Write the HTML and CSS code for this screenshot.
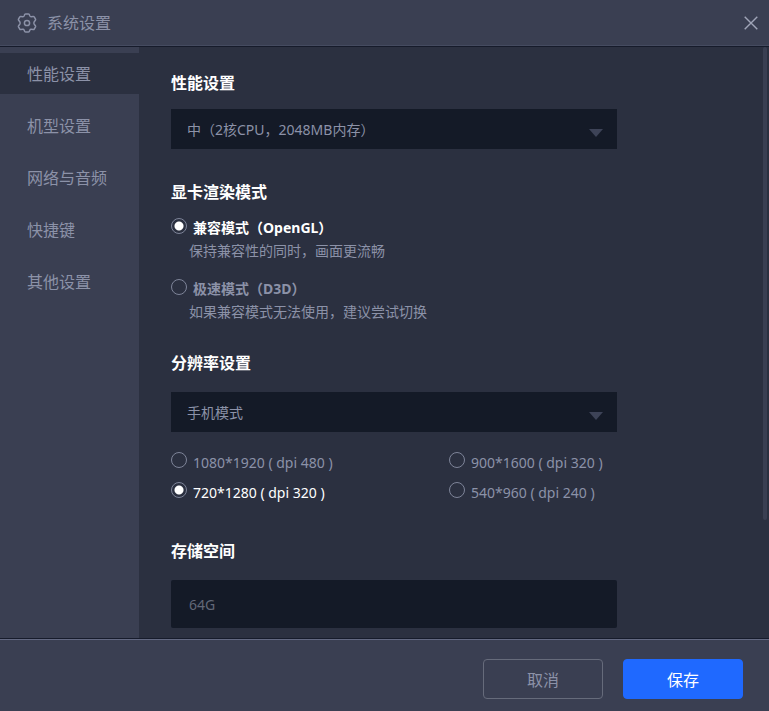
FILE: index.html
```html
<!DOCTYPE html>
<html lang="zh-CN">
<head>
<meta charset="utf-8">
<meta name="viewport" content="width=device-width, initial-scale=1">
<title>系统设置</title>
<link rel="stylesheet" href="styles.css">
</head>
<body>
<header class="titlebar">
  <svg class="gear" viewBox="0 0 20 20" aria-hidden="true"><path d="M7.1 3 7.7 1.5Q8 .9 8.7.9H11.3Q12 .9 12.3 1.5L12.9 3Q13.3 3.8 14.2 3.7L16.2 3.4Q16.9 3.3 17.2 3.9L18.5 6.2Q18.8 6.8 18.4 7.3L17.2 8.8Q16.4 10 17.2 11.2L18.4 12.7Q18.8 13.2 18.5 13.8L17.2 16.1Q16.9 16.7 16.2 16.6L14.2 16.3Q13.3 16.2 12.9 17L12.3 18.5Q12 19.1 11.3 19.1H8.7Q8 19.1 7.7 18.5L7.1 17Q6.7 16.2 5.8 16.3L3.8 16.6Q3.1 16.7 2.8 16.1L1.5 13.8Q1.2 13.2 1.6 12.7L2.8 11.2Q3.6 10 2.8 8.8L1.6 7.3Q1.2 6.8 1.5 6.2L2.8 3.9Q3.1 3.3 3.8 3.4L5.8 3.7Q6.7 3.8 7.1 3Z"/><circle cx="10" cy="10" r="2.6"/></svg>
  <h1 class="title">系统设置</h1>
  <button class="close" type="button" aria-label="关闭"><svg viewBox="0 0 14 14" aria-hidden="true"><path d="M.7.7 13.3 13.3M13.3.7.7 13.3"/></svg></button>
</header>
<div class="body">
  <nav class="sidebar">
    <a class="nav-item active" href="#performance">性能设置</a>
    <a class="nav-item" href="#model">机型设置</a>
    <a class="nav-item" href="#network">网络与音频</a>
    <a class="nav-item" href="#shortcuts">快捷键</a>
    <a class="nav-item" href="#other">其他设置</a>
  </nav>
  <main class="panel">
    <form class="form" id="settings">
      <section class="section">
        <h2 class="heading"><label for="perf">性能设置</label></h2>
        <div class="select-wrap"><select class="field" id="perf"><option>中（2核CPU，2048MB内存）</option></select></div>
      </section>
      <section class="section compact" role="radiogroup" aria-labelledby="render-title">
        <h2 class="heading" id="render-title">显卡渲染模式</h2>
        <div class="mode">
          <label class="option strong"><input type="radio" name="render" checked><span>兼容模式（OpenGL）</span></label>
          <p class="hint">保持兼容性的同时，画面更流畅</p>
        </div>
        <div class="mode">
          <label class="option strong"><input type="radio" name="render"><span>极速模式（D3D）</span></label>
          <p class="hint">如果兼容模式无法使用，建议尝试切换</p>
        </div>
      </section>
      <section class="section">
        <h2 class="heading roomy"><label for="screen">分辨率设置</label></h2>
        <div class="select-wrap"><select class="field" id="screen"><option>手机模式</option></select></div>
        <div class="resolutions">
          <label class="option"><input type="radio" name="res"><span>1080*1920 ( dpi 480 )</span></label>
          <label class="option"><input type="radio" name="res"><span>900*1600 ( dpi 320 )</span></label>
          <label class="option"><input type="radio" name="res" checked><span>720*1280 ( dpi 320 )</span></label>
          <label class="option"><input type="radio" name="res"><span>540*960 ( dpi 240 )</span></label>
        </div>
      </section>
      <section class="section">
        <h2 class="heading roomy"><label for="storage">存储空间</label></h2>
        <input class="field storage" id="storage" type="text" value="64G" readonly>
      </section>
    </form>
  </main>
  <div class="scroll-thumb"></div>
</div>
<footer class="actions">
  <button class="btn" type="button">取消</button>
  <button class="btn primary" type="submit" form="settings">保存</button>
</footer>
</body>
</html>
```

FILE: styles.css
```css
* { box-sizing: border-box; }

body {
  margin: 0;
  height: 100vh;
  display: flex;
  flex-direction: column;
  overflow: hidden;
  background: #2b3040;
  color: #8c92a8;
  font: 14px/20px "Noto Sans", "Noto Sans CJK SC", sans-serif;
}

h1, h2, p { margin: 0; }
button, select, input { font: inherit; }

.titlebar {
  flex: none;
  height: 47px;
  display: flex;
  align-items: center;
  gap: 10px;
  padding: 0 11px 0 17px;
  background: #3a3f52;
  border-bottom: 1px solid #161b2b;
  box-shadow: inset 0 -1px #454b60;
}

.gear { width: 20px; height: 20px; fill: none; stroke: #8c92a8; stroke-width: 1.5; stroke-linejoin: round; }
.title { flex: 1; font-size: 16px; line-height: 24px; font-weight: 400; }
.close { display: flex; padding: 0; border: 0; background: none; }
.close svg { width: 14px; height: 14px; stroke: #a0a5b8; stroke-width: 1.4; }

.body { flex: 1; min-height: 0; display: flex; position: relative; }

.sidebar {
  flex: none;
  width: 139px;
  display: flex;
  flex-direction: column;
  gap: 11px;
  padding-top: 6px;
  background: #3a3f52;
}

.nav-item {
  padding: 2px 0 0 27px;
  font-size: 16px;
  line-height: 39px;
  color: #8c92a8;
  text-decoration: none;
}
.nav-item.active { background: #2b3040; }

.panel { flex: 1; overflow-y: auto; padding: 24px 32px; scrollbar-width: none; }

.scroll-thumb {
  position: absolute;
  top: 0;
  right: 2px;
  width: 4px;
  height: 80%;
  border-radius: 2px;
  background: #3a3f52;
}

.form { max-width: 446px; }
.section { margin-bottom: 31px; }
.section.compact { margin-bottom: 29px; }

.heading { margin-bottom: 14px; font-size: 16px; line-height: 24px; font-weight: 700; color: #fff; }
.heading.roomy { margin-bottom: 17px; }

.select-wrap { position: relative; }
.select-wrap::after {
  content: "";
  position: absolute;
  top: 20px;
  right: 14px;
  border: 7px solid transparent;
  border-top: 8px solid #3d4357;
  border-bottom: 0;
  pointer-events: none;
}

.field {
  display: block;
  width: 100%;
  height: 40px;
  padding: 2px 16px 0;
  border: 0;
  border-radius: 0;
  appearance: none;
  background: #141a27;
  color: #8c92a8;
}
.field.storage { height: 48px; padding: 0 18px; border-radius: 2px; color: #626878; }

.option { display: flex; align-items: center; gap: 6px; }
.option:has(:checked) { color: #fff; }
.option.strong { font-weight: 700; }
.option input {
  appearance: none;
  flex: none;
  width: 16px;
  height: 16px;
  margin: 0 0 4px;
  border: 1px solid #7e8499;
  border-radius: 50%;
}
.option input:checked { background: radial-gradient(circle, #fff 4px, transparent 5px); }

.mode + .mode { margin-top: 18px; }
.hint { padding: 3px 0 0 18px; }

.resolutions {
  display: grid;
  grid-template-columns: 278px 1fr;
  grid-auto-rows: 30px;
  margin-top: 16px;
}
.resolutions input { margin-bottom: 6px; }

.actions {
  flex: none;
  height: 73px;
  display: flex;
  align-items: center;
  justify-content: flex-end;
  gap: 20px;
  padding: 8px 26px 0;
  background: #3a3f52;
  border-top: 1px solid #161b2b;
  box-shadow: inset 0 1px #636982;
}

.btn {
  width: 120px;
  height: 40px;
  padding: 2px 0 0;
  border: 1px solid #666b7b;
  border-radius: 4px;
  background: none;
  color: #8c92a8;
  font-size: 16px;
}
.btn.primary { border-color: #1f69ff; background: #1f69ff; color: #fff; }
```
